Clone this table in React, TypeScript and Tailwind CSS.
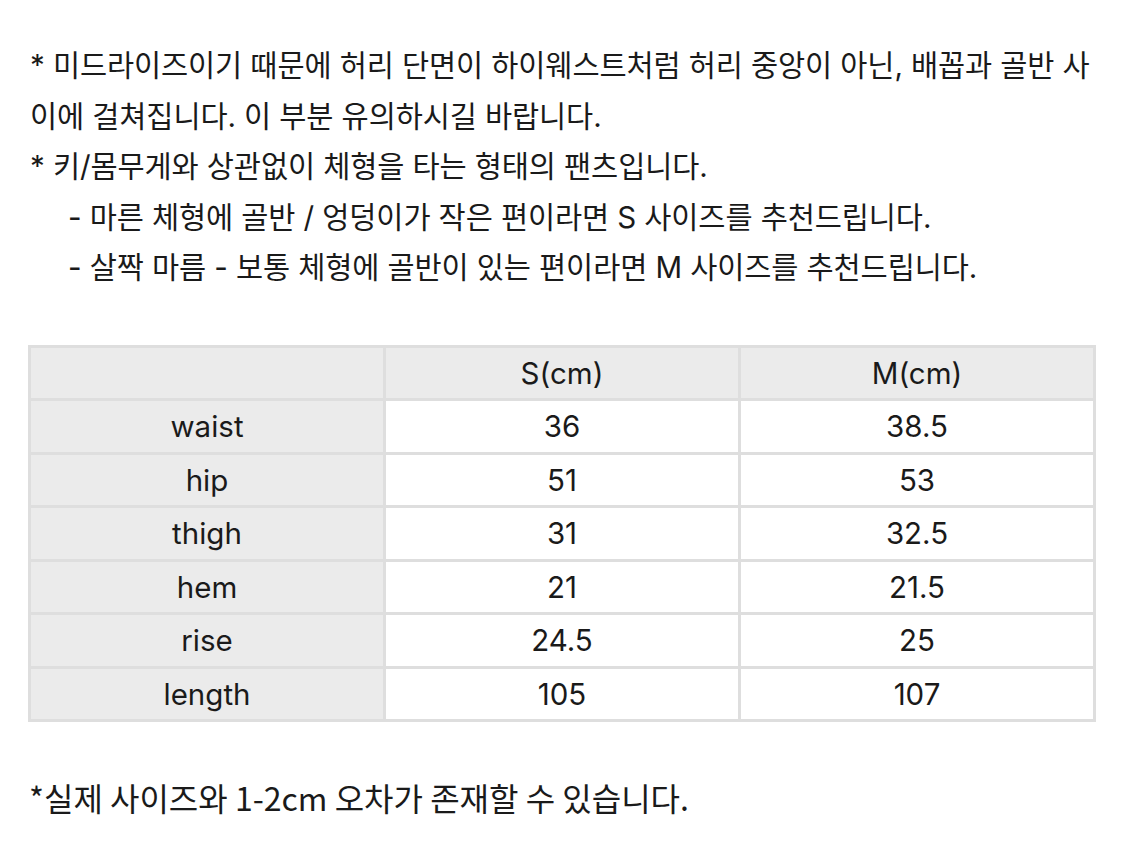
const rows = [
  ["waist", "36", "38.5"],
  ["hip", "51", "53"],
  ["thigh", "31", "32.5"],
  ["hem", "21", "21.5"],
  ["rise", "24.5", "25"],
  ["length", "105", "107"],
];

export default function App() {
  return (
    <div className="min-h-[852px] w-[1125px] bg-white px-[28px] pt-[40px] text-[29.5px] text-[#1a1a1a] [font-family:Inter,'Noto_Sans_CJK_KR',sans-serif]">
      <div className="leading-[50.5px] tracking-[-0.1px]">
        <p className="pl-[2px]">
          * 미드라이즈이기 때문에 허리 단면이 하이웨스트처럼 허리 중앙이 아닌, 배꼽과 골반 사
          <br />
          이에 걸쳐집니다. 이 부분 유의하시길 바랍니다.
        </p>
        <p className="pl-[2px]">* 키/몸무게와 상관없이 체형을 타는 형태의 팬츠입니다.</p>
        <p className="pl-[40px]">- 마른 체형에 골반 / 엉덩이가 작은 편이라면 S 사이즈를 추천드립니다.</p>
        <p className="pl-[40px]">- 살짝 마름 - 보통 체형에 골반이 있는 편이라면 M 사이즈를 추천드립니다.</p>
      </div>

      <table className="mt-[52px] w-[1068px] table-fixed border-collapse border-[3px] border-[#dedede] text-center">
        <thead>
          <tr className="h-[53.5px] bg-[#ebebeb]">
            <th className="border-[3px] border-[#dedede] font-normal"></th>
            <th className="border-[3px] border-[#dedede] font-normal">S(cm)</th>
            <th className="border-[3px] border-[#dedede] font-normal">M(cm)</th>
          </tr>
        </thead>
        <tbody>
          {rows.map((r) => (
            <tr key={r[0]} className="h-[53.5px]">
              <td className="border-[3px] border-[#dedede] bg-[#ebebeb]">{r[0]}</td>
              <td className="border-[3px] border-[#dedede]">{r[1]}</td>
              <td className="border-[3px] border-[#dedede]">{r[2]}</td>
            </tr>
          ))}
        </tbody>
      </table>

      <p className="mt-[50px] pl-[1px] text-[32px] leading-[50px] [font-family:'Noto_Sans_CJK_KR',sans-serif]">
        *실제 사이즈와 1-2cm 오차가 존재할 수 있습니다.
      </p>
    </div>
  );
}
